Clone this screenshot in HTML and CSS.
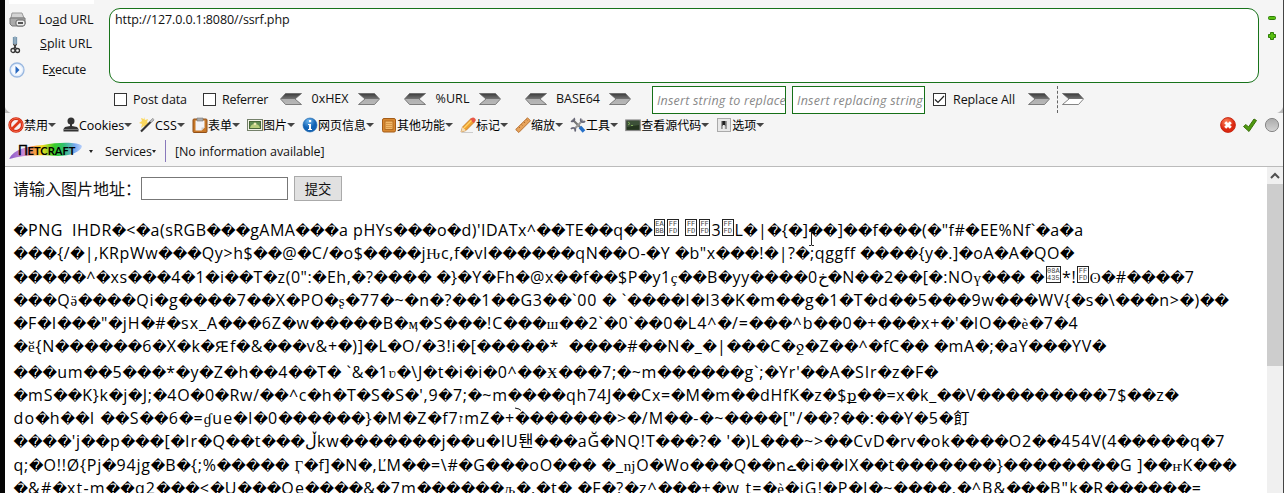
FILE: index.html
```html
<!DOCTYPE html>
<html lang="zh">
<head>
<meta charset="utf-8">
<title>ssrf.php</title>
<link rel="stylesheet" href="styles.css">
</head>
<body>
<svg class="defs" aria-hidden="true">
  <defs>
    <linearGradient id="metal" x1="0" y1="0" x2="0" y2="1"><stop offset="0" stop-color="#3c3c3c"/><stop offset=".49" stop-color="#747474"/><stop offset=".52" stop-color="#b0b0b0"/><stop offset="1" stop-color="#b8b8b8"/></linearGradient>
    <linearGradient id="metalw" x1="0" y1="0" x2="0" y2="1"><stop offset="0" stop-color="#3c3c3c"/><stop offset=".49" stop-color="#747474"/><stop offset=".52" stop-color="#fff"/></linearGradient>
    <linearGradient id="rainbow"><stop offset="0" stop-color="#8a5bc8"/><stop offset=".2" stop-color="#c889d8"/><stop offset=".32" stop-color="#f08a50"/><stop offset=".45" stop-color="#f5dc20"/><stop offset=".62" stop-color="#38cc28"/><stop offset=".75" stop-color="#30c070"/><stop offset=".9" stop-color="#78a8f0"/><stop offset="1" stop-color="#b8d0fa"/></linearGradient>
    <radialGradient id="red" cx=".4" cy=".3"><stop offset="0" stop-color="#ff8a60"/><stop offset="1" stop-color="#dc2810"/></radialGradient>
    <radialGradient id="blue" cx=".4" cy=".2"><stop offset="0" stop-color="#70b8f0"/><stop offset="1" stop-color="#1262b4"/></radialGradient>
    <linearGradient id="grey" x1="0" y1="0" x2="0" y2="1"><stop offset="0" stop-color="#aaa"/><stop offset="1" stop-color="#d4d4d4"/></linearGradient>
    <symbol id="right" viewBox="0 0 22 12"><path d="M.5.5H16.500L21.500 6l-5 5.500H.5L7 6z" stroke="#666" stroke-width=".8"/></symbol>
    <symbol id="left" viewBox="0 0 22 12"><path d="M21.500.5H5.500L.5 6l5 5.500h16L15 6z" stroke="#666" stroke-width=".8"/></symbol>
  </defs>
</svg>
<div class="window">
  <header class="hackbar">
    <div class="upper">
      <div class="actions">
        <div class="action"><svg width="18" height="16" viewBox="0 0 18 16"><path d="M3 1h10l2 5H2z" fill="#d4d4d4" stroke="#999"/><path d="M1 6h15v6l-2 2H3l-2-2z" fill="#aaa" stroke="#777"/><rect x="7" y="8" width="9" height="6" rx="2" fill="#eee" stroke="#666"/><path d="M9 11h5" stroke="#555" stroke-width="2"/></svg><span class="fit" data-width="55">Lo<u>a</u>d URL</span></div>
        <div class="action"><svg width="18" height="18" viewBox="0 0 18 18"><path d="M4.500 1v7M7.500 1v7M6 .5v8" stroke="#7898b0" fill="none" stroke-width="1.300"/><path d="M7.500 8l-3 5M4.500 8l3 5" stroke="#333" stroke-width="1.300"/><circle cx="4" cy="14.500" r="2" fill="none" stroke="#333" stroke-width="1.300"/><circle cx="8.500" cy="14.500" r="2" fill="none" stroke="#333" stroke-width="1.300"/></svg><span class="fit" data-width="52"><u>S</u>plit URL</span></div>
        <div class="action"><svg width="18" height="16" viewBox="0 0 18 16"><circle cx="8" cy="8" r="7" fill="#e4eefb" stroke="#9ab8e0" stroke-width="1.300"/><circle cx="8" cy="8" r="5" fill="#f8fbff"/><path d="M6.500 4l4 4-4 4z" fill="#2868c0"/></svg><span class="fit exec" data-width="44">E<u>x</u>ecute</span></div>
      </div>
      <div class="url"><span class="fit" data-width="174.500">http://127.0.0.1:8080//ssrf.php</span></div>
      <div class="sizer"><svg width="10" height="26" viewBox="0 0 10 26"><rect x="1.500" y="1.500" width="7" height="3" rx="1" fill="#58c010" stroke="#2f7d08"/><path d="M3.500 17.500h3v2h2v3h-2v2h-3v-2h-2v-3h2z" fill="#58c010" stroke="#2f7d08"/></svg></div>
    </div>
    <div class="tools">
      <i class="box"></i><span class="fit post" data-width="54">Post data</span>
      <i class="box ref"></i><span class="fit post" data-width="46">Referrer</span>
      <svg class="arr a1"><use href="#left"/></svg><span class="fit codec hex" data-width="37">0xHEX</span><svg class="arr"><use href="#right"/></svg>
      <svg class="arr a2"><use href="#left"/></svg><span class="fit codec pct" data-width="34">%URL</span><svg class="arr"><use href="#right"/></svg>
      <svg class="arr a2"><use href="#left"/></svg><span class="fit codec b64" data-width="44">BASE64</span><svg class="arr"><use href="#right"/></svg>
      <div class="field first"><span class="fit" data-width="129">Insert string to replace</span></div>
      <div class="field second"><span class="fit" data-width="126">Insert replacing string</span></div>
      <i class="box all"><svg width="11" height="11" viewBox="0 0 11 11"><path d="M1 5.500l3 3L10 2" fill="none" stroke="#222" stroke-width="1.200"/></svg></i><span class="fit post" data-width="62">Replace All</span>
      <svg class="arr a3"><use href="#right"/></svg><i class="dash"></i><svg class="arr white"><use href="#right"/></svg>
    </div>
  </header>
  <nav class="dev">
    <div class="item"><svg class="ic" viewBox="0 0 16 16"><circle cx="8" cy="8" r="6.300" fill="#f6eeee" stroke="#d02810" stroke-width="2.800"/><circle cx="8" cy="8" r="6.500" fill="none" stroke="#f86848" stroke-width="1"/><path d="M3.500 12.500l9-9" stroke="#e03818" stroke-width="2.600"/></svg><span>禁用</span><b></b></div>
    <div class="item"><svg class="ic" viewBox="0 0 16 16"><circle cx="8" cy="4" r="3.500" fill="#333"/><path d="M7 6h2v3l5 1 1.500 2v2.500H.5V12L2 10l5-1z" fill="#333"/><path d="M1 12.500h14" stroke="#777"/></svg><span class="fit" data-width="45">Cookies</span><b></b></div>
    <div class="item css"><svg class="ic" viewBox="0 0 16 16"><path d="M5 0l1 3 3-1-1 3 2 2-3 1v3L5 9l-3 2 1-4-3-1 3-2-1-3 3 1z" fill="#fad860"/><path d="M2 14.500L14.500 2" stroke="#333" stroke-width="2.200"/><path d="M11.500 5l3-3" stroke="#bbb" stroke-width="2"/></svg><span class="fit" data-width="22">CSS</span><b></b></div>
    <div class="item"><svg class="ic" viewBox="0 0 16 16"><rect x="1" y="2" width="14" height="13.500" rx="1" fill="#c87828" stroke="#90501a"/><path d="M3.500 3.500h9v7l-3 3h-6z" fill="#f4f4f8"/><path d="M12.500 10.500h-3v3" fill="#ccc"/><path d="M5 1h6v3H5z" fill="#aaa" stroke="#777" stroke-width=".6"/></svg><span>表单</span><b></b></div>
    <div class="item"><svg class="ic" viewBox="0 0 16 16"><rect x=".5" y="2.500" width="15" height="11" fill="#f3f3e8" stroke="#74806a"/><rect x="2.500" y="4.500" width="11" height="7" fill="#608c50" stroke="#486838"/><path d="M3 11c1-4 4-5 5-2 2-3 4-1 5 2z" fill="#b8ce7c"/><circle cx="8" cy="7" r="1.500" fill="#eee9b0"/></svg><span>图片</span><b></b></div>
    <div class="item"><svg class="ic" viewBox="0 0 16 16"><circle cx="8" cy="8" r="7" fill="url(#blue)" stroke="#1560a8" stroke-width=".6"/><rect x="7" y="3" width="2.200" height="2.200" fill="#fff"/><path d="M6 7h3v5h1v1H6v-1h1V8H6z" fill="#fff"/></svg><span>网页信息</span><b></b></div>
    <div class="item"><svg class="ic" viewBox="0 0 16 16"><rect x="1.500" y="1.500" width="13" height="13.500" rx="1.500" fill="#d88830" stroke="#a45c18"/><rect x="4" y="4" width="8" height="8.500" fill="#f2b868" stroke="#b46c20"/><path d="M5 6.500h6M5 8.500h6M5 10.500h6" stroke="#cc8538" stroke-width=".7"/></svg><span>其他功能</span><b></b></div>
    <div class="item"><svg class="ic" viewBox="0 0 16 16"><path d="M2 15.500h11" stroke="#ccc"/><path d="M1 15l1.500-5L11 1.500 14.500 5 6 13.500z" fill="#f0a030" stroke="#b87020" stroke-width=".7"/><path d="M10 2.500L11.500 1q2-1 3.500.5T15 4.500L13.500 6z" fill="#e85848"/><path d="M1 15l1.500-5L6 13.500z" fill="#f4dcb4"/><path d="M4 11l7.500-7.500" stroke="#ffd468" stroke-width="1.200"/></svg><span>标记</span><b></b></div>
    <div class="item"><svg class="ic" viewBox="0 0 16 16"><path d="M.7 12.500L12.500.8l3 3L3.800 15.500z" fill="#e6a35c" stroke="#b26a28" stroke-width=".9"/><path d="M4 10l1 1M6.500 7.500l1 1M9 5l1 1M11.500 2.500l1 1" stroke="#a76020" stroke-width=".8"/></svg><span>缩放</span><b></b></div>
    <div class="item"><svg class="ic" viewBox="0 0 16 16"><path d="M2.500 2.500L11 11" stroke="#777" stroke-width="2.200"/><path d="M13 3L4 12.500" stroke="#999" stroke-width="2"/><path d="M10 10l4 4.500" stroke="#2670c8" stroke-width="3.500"/><path d="M11 1.500q-1 3 1 3.500t3-1M5 14.500q1-3-1-3.500t-3 1M1 4q2 1 3-.5T4 1" fill="none" stroke="#667" stroke-width="1.700"/></svg><span>工具</span><b></b></div>
    <div class="item"><svg class="ic" viewBox="0 0 16 16"><rect x=".8" y="3" width="14.400" height="10.500" fill="#24351f" stroke="#8a8a8a" stroke-width="1.200"/><path d="M2 4h12v4L2 10z" fill="#3c5038"/><path d="M3 5l2 1.500L3 8M6 8.500h2" fill="none" stroke="#8fbf60" stroke-width=".8"/></svg><span>查看源代码</span><b></b></div>
    <div class="item"><svg class="ic" viewBox="0 0 16 16"><rect x="1.500" y="1.500" width="13" height="13" fill="#e8e8e8" stroke="#aaa"/><rect x="5" y="4" width="6" height="8" fill="#999"/><rect x="6.300" y="4" width="3" height="5" fill="#222"/><rect x="6.800" y="8" width="2" height="4" fill="#eee"/></svg><span>选项</span><b></b></div>
    <div class="status">
      <svg class="ic" viewBox="0 0 16 16"><circle cx="8" cy="8" r="7.400" fill="url(#red)" stroke="#c42410" stroke-width=".9"/><path d="M5.200 5.200l5.600 5.600M10.800 5.200l-5.600 5.600" stroke="#fff" stroke-width="2.800"/></svg>
      <svg class="ic" viewBox="0 0 16 16"><path d="M1.500 9.500l2.500-2 2.500 2.500L12 2l2.500 1.500-7.500 11z" fill="#4f9a10" stroke="#3b700c"/></svg>
      <svg class="ic" viewBox="0 0 16 16"><circle cx="8" cy="8" r="6.600" fill="url(#grey)" stroke="#888"/></svg>
    </div>
  </nav>
  <nav class="netcraft">
    <svg class="logo" width="74" height="20" viewBox="0 0 74 20"><path d="M0 18C5 8 18 5 34 4 50 1 70 1 73 5c-1 6-12 10-24 10-14-1-32-2-49 3z" fill="url(#rainbow)"/><text x="9" y="14" font-size="13.500" font-weight="400" stroke="#000" stroke-width=".4" textLength="10" lengthAdjust="spacingAndGlyphs">Π</text><text x="18.500" y="13.500" font-size="11" font-weight="700" textLength="48" lengthAdjust="spacingAndGlyphs">ETCRAFT</text></svg>
    <i class="tri"></i><span class="fit services" data-width="47">Services</span><i class="tri"></i><i class="rule"></i><span class="fit" data-width="149.500">[No information available]</span>
  </nav>
  <main class="page">
    <div class="content">
      <form class="form"><label>请输入图片地址：</label><span class="text"></span><span class="submit">提交</span></form>
      <div class="dump">
<p class="fit line" data-width="1070">�PNG&nbsp; IHDR�&lt;�a(sRGB���gAMA���a pHYs���o�d)'IDATx^��TE��q��<s>EA BB</s><s>FF FD</s> <s>FF FD</s><s>FF FD</s>3<s>FF FD</s>L�|�{�]��]��f���(�"f#�EE%Nf`�a�a</p>
<p class="fit line" data-width="1061">���{/�|,KRpWw���Qy&gt;h$��@�C/�o$����j<em>Ԋ</em>c,f�vI������qN��O-�Y �b"x���!�|?�;qggff ����{y�.]�oA�A�QO�</p>
<p class="fit line" data-width="1181.500">�����^�xs���4�1�i��T�z(0":�Eh,�?���� �}�Y�Fh�@x��f��$P�y1<em>ҫ</em>��B�yy����0خ�N��2��[�:NO<em>ү</em>��� �<s class="wide">08A 435</s>*!<s>FF FD</s><em>ʘ</em>�#����7</p>
<p class="fit line" data-width="1215.500">���Q<em>ӛ</em>����Qi�g����7��X�PO�<em>ʂ</em>�77�~�n�?��1��G3��`00 � `����I�I3�K�m��g�1�T�d��5���9w���WV{�s�\���n&gt;�)��</p>
<p class="fit line" data-width="1065">�F�I���"�jH�#�sx_A���6Z�w�����B�<em>ӎ</em>�S���!C���<em>ш</em>��2`�0`��0�L4^�/=���^b��0�+���x+�'�lO��<em>ѐ</em>�7�4</p>
<p class="fit line tall" data-width="1093">�<em>ӗ</em>{N������6�X�k�<em>Ԙ</em>f�&amp;���v&amp;+�)]�L�O/�3!i�[�����*&nbsp; ����#��N�_�|���C�<em>ջ</em>�Z��^�fC�� �mA�;�aY���YV�</p>
<p class="fit line" data-width="925">���um��5���*�y�Z�h��4��T� `&amp;�1<em>ʋ</em>�\J�t�i�i�0^��<em>Ӿ</em>���7;�~m������g`;�Yr'��A�SIr�z�F�</p>
<p class="fit line" data-width="1165.500">�mS��K}k�j�J;�4O�0�Rw/��^c�h�T�S�S�',9�7;�~m����qh74J��Cx=�M�m��dHfK�z�$<em>ք</em>��=x�k_��V���������7$��z�</p>
<p class="fit line" data-width="957">do�h��I ��S��6�=<em>ɠ</em>ue�I�0������}�M�Z�f7<em>ז</em>mZ�+<svg class="accent" viewBox="0 0 7 4"><path d="M0 1l4 1 2 1.500" fill="none" stroke="#111"/></svg>�������&gt;�/M��-�~����["/��?��:��Y�5�飣</p>
<p class="fit line" data-width="1212.500">����'j��p���[�Ir�Q��t���ڵkw�������j��u�IU퇜���aĞ�NQ!T���?� '�)L���~&gt;��CvD�rv�ok����O2��454V(4�����q�7</p>
<p class="fit line" data-width="1224">q;�O!!Ø{Pj�94jg�B�{;%����� <em>Ӷ</em>�f]�N�,ĽM��=\#�G���oO��� �_<em>ǌ</em>O�Wo���Q��nے�i��IX��t�������}��������G ]��<em>ҥ</em>K���</p>
<p class="fit line" data-width="1188.500">�&amp;#�xt-m��q2���&lt;�U���Qe����&amp;�7m������<em>љ</em>�.�t� �F�?�z^���+�w t=�<em>ѐ</em>�jG!�P�I�~����.�^B&amp;���B"k�R������=</p>
      </div>
    </div>
    <aside class="scroll"><svg width="16" height="17" viewBox="0 0 16 17"><path d="M4 11l4-4 4 4" fill="none" stroke="#505050" stroke-width="2"/></svg><i></i></aside>
  </main>
  <svg class="cursor" width="7" height="15" viewBox="0 0 7 15"><path d="M1 .5h2l.5.5.5-.5h2M3.500 1v13M1 14.500h2l.5-.5.5.5h2" fill="none" stroke="#222"/></svg>
</div>
<script src="fit.js"></script>
</body>
</html>
```
FILE: styles.css
```css
* { box-sizing: border-box; }
body { margin: 0; overflow: hidden; background: #fff; font-family: "Open Sans", "Noto Sans CJK SC", sans-serif; font-size: 12.500px; color: #111; }
.defs { position: absolute; width: 0; height: 0; }
.window { position: relative; width: 1284px; height: 493px; overflow: hidden; border-left: 5px solid #050505; border-right: 1px solid #444; background: #f5f5f5; display: flex; flex-direction: column; }
.window::before { content: ""; position: absolute; left: 4px; top: 0; width: 85px; height: 4px; background: #fff; }
.fit { white-space: pre; display: inline-block; }
i { display: block; flex: none; }
svg { flex: none; }
.hackbar { height: 113px; flex: none; padding-top: 8px; background: radial-gradient(circle at 100% 0, transparent 9px, #bbb 10px) 0 100% / 9px 9px no-repeat, radial-gradient(circle at 0 0, transparent 9px, #bbb 10px) 100% 100% / 9px 9px no-repeat; }
.upper { display: flex; height: 75px; }
.actions { width: 104px; display: flex; flex-direction: column; padding: 0 0 0 4px; }
.action { display: flex; align-items: center; height: 25.500px; }
.action .fit { width: 66px; display: flex; justify-content: center; margin: -2px 0 0 6px; }
.action .exec { margin-left: 4px; }
.action:first-child { height: 24px; }
.action u { text-underline-offset: 1px; }
.url { width: 1150px; height: 75px; background: #fff; border: 1px solid #18731b; border-radius: 11px; padding: 2px 5px; line-height: 17px; }
.sizer { padding: 7px 0 0 8px; height: 34px; }
.tools { display: flex; align-items: center; height: 30px; padding-left: 109px; }
.tools > .fit { line-height: 18px; }
.box { width: 13px; height: 13px; border: 1px solid #333; background: #fff; margin-top: 3px; }
.box svg { display: block; }
.post { width: 54px; margin: 3px 0 0 6px; }
.ref { margin-left: 16px; }
.ref + .post { width: 46px; }
.arr { width: 22px; height: 12px; fill: url(#metal); margin-top: 2px; }
.a1 { margin-left: 12px; }
.a2 { margin-left: 24px; }
.codec { text-align: center; }
.hex { width: 56px; }
.pct { width: 53px; }
.b64 { width: 62px; }
.tools > .codec { margin: 1px 0 0; }
.field { height: 28px; margin-top: 3px; border: 1px solid #167018; background: #fff; padding-left: 4px; overflow: hidden; line-height: 28px; font-style: italic; color: #888; }
.first { width: 134px; margin-left: 21px; }
.second { width: 133px; margin-left: 6px; }
.all { margin-left: 8px; }
.all + .post { width: 62px; margin-left: 7px; }
.a3 { margin-left: 13px; }
.dash { height: 27px; border-left: 1px dashed #666; margin: 3px 4px 0 7px; }
.white { fill: url(#metalw); }
.dev { height: 24px; flex: none; display: flex; gap: 7px; align-items: center; padding-left: 3px; font-size: 12px; color: #000; }
.item { display: flex; align-items: center; height: 24px; white-space: nowrap; }
.item .fit { font-size: 12.500px; }
.ic { width: 16px; height: 16px; }
.item b { width: 8px; height: 4px; background: #444; clip-path: polygon(0 0, 100% 0, 50% 100%); }
.status { margin-left: auto; display: flex; gap: 6px; padding-right: 3px; }
.netcraft { height: 29px; flex: none; display: flex; align-items: center; padding: 0 0 1px 4px; }
.logo { font-family: Lato, sans-serif; }
.tri { border: 2px solid transparent; border-top: 3px solid #222; border-bottom: 0; margin-left: 6px; }
.services { margin-left: 12px; width: 47px; }
.services + .tri { margin-left: 0; }
.rule { width: 1px; height: 22px; background: #8878bb; margin: 0 9px 0 9px; }
.page { flex: 1; border-top: 1px solid #bbb; background: #fff; display: flex; }
.content { flex: 1; padding: 8px 0 0 8px; }
.form { display: flex; align-items: center; height: 26px; margin: 0; font-size: 16px; }
.form label { width: 128px; white-space: nowrap; }
.text { width: 147px; height: 23px; border: 1px solid #777; background: #fff; }
.submit { margin-left: 6px; width: 48px; height: 25px; border: 1px solid #aaa; background: #e1e1e1; font-size: 13.333px; line-height: 24px; text-align: center; }
.dump { padding: 18px 0 0 .5px; font-size: 16px; color: #000; }
.line { display: block; width: max-content; height: 23.250px; line-height: 23.250px; margin: 0; direction: ltr; unicode-bidi: bidi-override; font-kerning: none; }
.tall { margin-bottom: 2px; }
.bad { font: 14.200px/10px "DejaVu Sans", sans-serif; letter-spacing: 0; }
.line em { font: 15px/10px "Liberation Serif", "DejaVu Serif", serif; }
.line s { display: inline-block; overflow: hidden; width: 11.500px; height: 17px; margin: -4px 1px 0; padding-top: 1px; border: 1px solid #222; font: 7px/7px "Liberation Mono", monospace; letter-spacing: 0; white-space: normal; text-decoration: none; text-align: center; color: #444; vertical-align: 0; }
.line s.wide { width: 15.500px; }
.accent { width: 7px; height: 4px; margin: 0 -7px 13px 0; }
.scroll { width: 16px; background: #f0f0f0; }
.scroll svg { display: block; }
.scroll i { height: 182px; background: #cdcdcd; }
.cursor { position: absolute; left: 803px; top: 231px; }
```
FILE: fit.js
```js
// Wraps runs of replacement characters, then spaces each label to its own width.
document.querySelectorAll('.line').forEach(line => {
  [...line.childNodes].filter(n => n.nodeType === 3).forEach(node => {
    const parts = node.data.split(/(\uFFFD+)/).filter(Boolean).map(part => {
      if (part[0] !== '\uFFFD') return document.createTextNode(part);
      const span = document.createElement('span');
      span.className = 'bad';
      span.textContent = part;
      return span;
    });
    node.replaceWith(...parts);
  });
});
document.querySelectorAll('.fit').forEach(el => {
  const range = document.createRange();
  range.selectNodeContents(el);
  const spaced = [...el.childNodes].filter(n => n.nodeType === 3 || /^(U|EM)$/.test(n.tagName)).map(n => n.textContent).join('').length;
  el.style.letterSpacing = (Number(el.dataset.width) - range.getBoundingClientRect().width) / spaced + 'px';
});
```
